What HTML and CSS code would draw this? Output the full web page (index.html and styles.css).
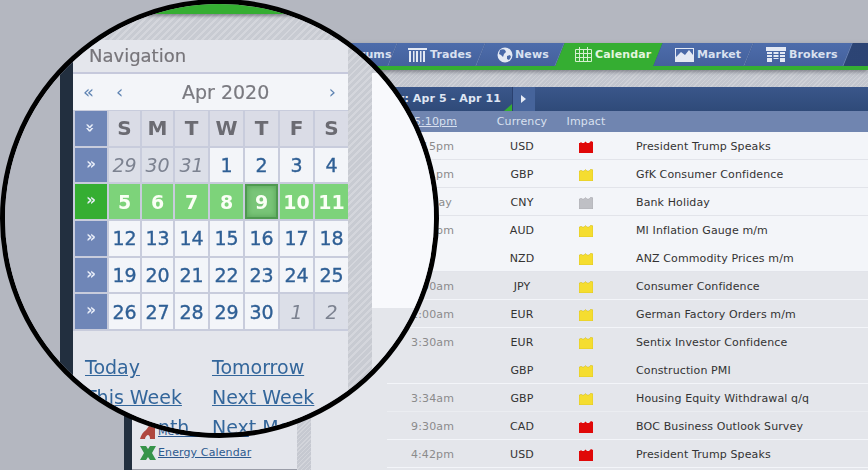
FILE: index.html
```html
<!DOCTYPE html>
<html lang="en">
<head>
  <meta charset="UTF-8" />
  <title>Calendar</title>
  <link rel="stylesheet" href="styles.css">
</head>
<body>
  <div id="page">
    <div id="nav">
      <div class="tab w-forums"><span>Forums</span></div>
      <div class="tab w-trades">
        <svg width="19" height="14" viewBox="0 0 19 14" fill="#e4e9f4"><path d="M0 0h19v2H0zM1 3h2v11H1zM5 3h1.500v11H5zM8 3h2v11H8zM12 3h1.500v11H12zM15 3h2v11h-2z"/></svg>
        <span>Trades</span>
      </div>
      <div class="tab w-news">
        <svg width="16" height="16" viewBox="0 0 16 16"><circle cx="8" cy="8" r="7.500" fill="#e4e9f4"/><path d="M3 3c2-1 4-1 5 0l1 2-2 2-1 3-2-2-2-1zM10 9l3-1 1 2-2 3-2-1z" fill="#4a69a8"/></svg>
        <span>News</span>
      </div>
      <div class="tab tab-on w-cal">
        <svg width="17" height="15" viewBox="0 0 17 15" fill="none" stroke="#d5f0d0" stroke-width="1"><path d="M.5 2.500h16v12H.5zM.5 6.500h16M.5 10.500h16M4.500 2.500v12M8.500 2.500v12M12.500 2.500v12M4.500 0v3M12.500 0v3"/></svg>
        <span>Calendar</span>
      </div>
      <div class="tab w-market">
        <svg width="19" height="14" viewBox="0 0 19 14"><path d="M0 0h19v14H0z" fill="#e4e9f4"/><path d="M1 9l5-5 4 3 4-5 4 5V1H1z" fill="#4a69a8"/></svg>
        <span>Market</span>
      </div>
      <div class="tab w-brokers">
        <svg width="20" height="15" viewBox="0 0 20 15" fill="#e4e9f4"><path d="M0 0h20v4H0zM1 5h5v2H1zM7.500 5h5v2h-5zM14 5h5v2h-5zM1 8h5v2H1zM7.500 8h5v2h-5zM14 8h5v2h-5zM1 11h5v4H1zM14 11h5v4h-5zM7.500 11h5v1h-5z"/></svg>
        <span>Brokers</span>
      </div>
    </div>
    <div id="layout">
      <div class="strip"></div>
      <div class="sidebar">
        <a class="side-link"><svg width="16" height="14" viewBox="0 0 16 14"><path d="M0 14c1-4 3-7 6-9l3-4 6 2v11H10c0-3-1-4-2-4s-3 2-3 4z" fill="#b0483f"/></svg><span>Metals Calendar</span></a>
        <a class="side-link"><svg width="16" height="14" viewBox="0 0 16 14"><path d="M0 0h6l2 3 2-3h6l-4 7 4 7h-6l-2-3-2 3H0l4-7z" fill="#37944a"/></svg><span>Energy Calendar</span></a>
      </div>
      <div class="side-gap"></div>
      <div class="main">
        <div class="hatch-top"></div>
        <div class="datebar">
          <div class="date-label">Calendar: Apr 5 - Apr 11</div>
          <div class="date-next"></div>
        </div>
        <div class="colhead">
          <div class="col-time">
            <svg width="6" height="10" viewBox="0 0 6 10"><path d="M3 0l3 5H4v5H2V5H0z" fill="#e8792a"/></svg>
            <u>5:10pm</u>
          </div>
          <div class="col-cur">Currency</div>
          <div class="col-imp">Impact</div>
        </div>
        <div id="rows"></div>
      </div>
    </div>
  </div>

  <div id="lens">
    <div class="mag">
      <div class="mag-nav"></div>
      <div class="mag-body">
        <div class="mag-strip"></div>
        <div class="mag-card">
          <div class="mag-title">Navigation</div>
          <div class="mag-month">
            <span class="arrow a-first">«</span>
            <span class="arrow a-prev">‹</span>
            <span class="month-name">Apr 2020</span>
            <span class="arrow">›</span>
          </div>
          <div class="cal" id="cal"></div>
          <div class="quick">
            <a>Today</a><a>Tomorrow</a>
            <a>This Week</a><a>Next Week</a>
            <a>This Month</a><a>Next Month</a>
          </div>
        </div>
        <div class="mag-gap"></div>
        <div class="mag-panel">
          <div class="mag-white"></div>
        </div>
      </div>
    </div>
  </div>

  <script>
    const events = [
      ["USD", "red", "President Trump Speaks", "x", "4:15pm"],
      ["GBP", "yel", "GfK Consumer Confidence", "", "7:01pm"],
      ["CNY", "gry", "Bank Holiday", "d", "All Day"],
      ["AUD", "yel", "MI Inflation Gauge m/m", "n", "8:00pm"],
      ["NZD", "yel", "ANZ Commodity Prices m/m", "", ""],
      ["JPY", "yel", "Consumer Confidence", "g", "1:00am"],
      ["EUR", "yel", "German Factory Orders m/m", "g", "2:00am"],
      ["EUR", "yel", "Sentix Investor Confidence", "gn", "3:30am"],
      ["GBP", "yel", "Construction PMI", "g", ""],
      ["GBP", "yel", "Housing Equity Withdrawal q/q", "gf", "3:34am"],
      ["CAD", "red", "BOC Business Outlook Survey", "g", "9:30am"],
      ["USD", "red", "President Trump Speaks", "g", "4:42pm"]
    ];

    const rows = document.getElementById("rows");
    events.forEach((ev) => {
      const row = document.createElement("div");
      row.className = "row";
      if (ev[3].includes("g")) row.classList.add("row-grey");
      if (ev[3].includes("n")) row.classList.add("no-line");
      if (ev[3].includes("f")) row.classList.add("faint");
      if (ev[3].includes("d")) row.classList.add("all-day");
      row.innerHTML =
        '<div class="r-time">' + ev[4] + '</div>' +
        '<div class="r-cur">' + ev[0] + '</div>' +
        '<div class="r-imp"><svg width="14" height="12" viewBox="0 0 14 12"><path class="' + ev[1] + '" d="M0 12V2h1l1-1 1 1h2l1.500-1.500L8 2h2l2-2 2 1v11z"/></svg></div>' +
        '<div class="r-event">' + ev[2] + '</div>';
      rows.appendChild(row);
    });

    const cal = document.getElementById("cal");
    function addCell(cls, txt) {
      const c = document.createElement("div");
      c.className = cls;
      c.textContent = txt;
      cal.appendChild(c);
    }
    addCell("wk wk-down", "»");
    ["S", "M", "T", "W", "T", "F", "S"].forEach((d) => addCell("dow", d));
    const weeks = [
      [29, 30, 31, 1, 2, 3, 4],
      [5, 6, 7, 8, 9, 10, 11],
      [12, 13, 14, 15, 16, 17, 18],
      [19, 20, 21, 22, 23, 24, 25],
      [26, 27, 28, 29, 30, 1, 2]
    ];
    weeks.forEach((w, i) => {
      addCell(i === 1 ? "wk wk-on" : "wk", "»");
      w.forEach((d, j) => {
        let cls = "day";
        if ((i === 0 && j < 3) || (i === 4 && j > 4)) cls += " other";
        if (i === 1) cls += " on";
        if (i === 1 && d === 9) cls += " today";
        addCell(cls, d);
      });
    });
  </script>
</body>
</html>
```

FILE: styles.css
```css
* { box-sizing: border-box; }
html, body {
  margin: 0;
  padding: 0;
  width: 868px;
  height: 470px;
  overflow: hidden;
  font-family: "DejaVu Sans", Verdana, sans-serif;
  font-size: 11px;
  letter-spacing: 0.12px;
  background: #b4b7c0;
}
#page {
  width: 868px;
  height: 470px;
  padding-top: 43px;
  display: flex;
  flex-direction: column;
}

/* top nav */
#nav {
  height: 27px;
  margin-left: 132px;
  padding-left: 173px;
  display: flex;
  flex: none;
  overflow: hidden;
  border-bottom: 4px solid #35ae32;
  background: linear-gradient(90deg, #3a5284, #2c4474);
  box-shadow: 0 2px 4px rgba(60, 60, 70, 0.5);
  position: relative;
  z-index: 1;
}
.tab {
  position: relative;
  height: 23px;
  display: flex;
  align-items: center;
  gap: 3px;
  padding-left: 15px;
  color: #d9e1f0;
  font-weight: bold;
  z-index: 0;
}
.tab::before {
  content: "";
  position: absolute;
  inset: 0;
  z-index: -1;
  transform: skewX(-22deg);
  background: linear-gradient(#4d6cab, #44619c);
  border-right: 1px solid #6a84b8;
}
.tab-on { color: #e3f5df; }
.tab-on::before { background: #35ae32; border-right: none; }
.w-forums { width: 88px; padding-left: 40px; }
.w-trades { width: 88px; }
.w-news { width: 79px; padding-left: 16px; gap: 2px; }
.w-cal { width: 98px; padding-left: 15px; }
.w-market { width: 91px; padding-left: 17px; }
.w-brokers { width: 99px; padding-left: 17px; }

/* page under nav */
#layout {
  flex: 1;
  display: flex;
  padding-left: 124px;
  min-height: 0;
}
.strip {
  width: 8px;
  background: #222f3f;
}
.sidebar {
  width: 165px;
  background: #e4e6ec;
  border-bottom: 1px solid #9a9da8;
  display: flex;
  flex-direction: column;
  justify-content: flex-end;
  padding: 0 0 9px 8px;
  gap: 7px;
}
.side-link {
  display: flex;
  align-items: center;
  gap: 2px;
  color: #2d5a8f;
  line-height: 14px;
  height: 14px;
}
.side-link span { text-decoration: underline; }
.side-gap {
  width: 14px;
  background: repeating-linear-gradient(135deg, #d3d5db 0 1px, #c6c9d1 1px 3px);
}
.main {
  flex: 1;
  background: #e4e6eb;
  min-width: 0;
}
.hatch-top {
  height: 17px;
  background: repeating-linear-gradient(135deg, #cfd1d7 0 1px, #c3c6ce 1px 3px);
}
.datebar {
  height: 24px;
  display: flex;
  background: linear-gradient(#3a568a, #2f4a79);
}
.date-label {
  position: relative;
  width: 202px;
  padding-right: 11px;
  text-align: right;
  line-height: 24px;
  font-weight: bold;
  color: #dfe6f3;
  border-right: 1px solid #2a4170;
}
.date-label::after {
  content: "";
  position: absolute;
  right: 0;
  bottom: 0;
  border-bottom: 7px solid #35ae32;
  border-left: 8px solid transparent;
}
.date-next {
  width: 22px;
  background: #46649b;
  position: relative;
}
.date-next::after {
  content: "";
  position: absolute;
  left: 8px;
  top: 8px;
  border-left: 5px solid #e6ebf5;
  border-top: 4px solid transparent;
  border-bottom: 4px solid transparent;
}
.colhead, .row {
  display: grid;
  grid-template-columns: 67px 112px 40px 1fr;
  align-items: center;
}
.colhead {
  height: 21px;
  padding-left: 76px;
  background: #7085b0;
  color: #d8e0ef;
}
.col-time {
  display: flex;
  align-items: center;
  justify-content: flex-end;
  gap: 1px;
  white-space: nowrap;
  margin-right: -3px;
}
.col-time svg { flex: none; }
.col-cur { margin-left: 24px; text-align: center; }
.col-imp { text-align: center; }
.row {
  margin-left: 76px;
  height: 28px;
  padding-top: 2px;
  background: #f3f5f9;
  border-bottom: 1px solid #e2e4ea;
  color: #333;
}
.row-grey {
  background: #e4e6eb;
  border-bottom: 1px solid #f3f5f9;
}
.no-line { border-bottom-color: transparent; }
.row-grey.no-line { border-bottom-color: transparent; }
.row-grey.faint { border-bottom-color: #ebedf1; }
.r-time { text-align: right; color: #8b8b8b; }
.all-day .r-time { padding-right: 2px; }
.r-cur { margin-left: 24px; text-align: center; }
.r-imp { display: flex; justify-content: center; }
.r-event { margin-left: 30px; }
.red { fill: #e00808; }
.yel { fill: #f5dd30; stroke: #cfb820; stroke-width: 0.5; }
.gry { fill: #bfc0c5; stroke: #a4a5aa; stroke-width: 0.5; }

/* magnifier */
#lens {
  position: absolute;
  left: 0;
  top: -1px;
  z-index: 5;
  width: 439px;
  height: 439px;
  border-radius: 50%;
  border: 5px solid #000;
  overflow: hidden;
  background: #b4b7c0;
}
.mag {
  position: absolute;
  left: -5px;
  top: -4px;
  width: 868px;
  height: 470px;
  display: flex;
  flex-direction: column;
  filter: blur(0.4px);
  letter-spacing: 0;
}
.mag-nav {
  height: 14px;
  flex: none;
  background: #35ae32;
  border-top: 4px solid #2c4474;
  box-shadow: 0 2px 3px rgba(60, 60, 70, 0.5);
  position: relative;
  z-index: 1;
}
.mag-body {
  flex: 1;
  display: flex;
  padding: 26px 0 0 60px;
  background: repeating-linear-gradient(135deg, #d4d6dc 0 2px, #c8cbd2 2px 5px);
  position: relative;
}
.mag-body::before {
  content: "";
  position: absolute;
  left: 0;
  top: 0;
  bottom: 0;
  width: 60px;
  background: #b4b7c0;
}
.mag-strip {
  width: 13px;
  background: #222f3f;
  position: relative;
}
.mag-card {
  width: 275px;
  background: #e4e6ec;
  position: relative;
}
.mag-title {
  height: 34px;
  padding-left: 16px;
  font-size: 18px;
  line-height: 32px;
  color: #77757a;
  -webkit-text-stroke: 0.2px #77757a;
  border-bottom: 2px solid #c6c9dc;
}
.mag-month {
  height: 36px;
  display: flex;
  align-items: center;
  background: #f3f5f9;
  position: relative;
  color: #5f84b3;
  font-size: 18px;
  justify-content: flex-end;
  padding-right: 12px;
}
.arrow { line-height: 1; }
.a-first { position: absolute; left: 10px; }
.a-prev { position: absolute; left: 43px; }
.month-name {
  position: absolute;
  left: 109px;
  font-size: 19px;
  color: #7a7a80;
  -webkit-text-stroke: 0.2px #7a7a80;
}
.cal {
  display: grid;
  grid-template-columns: 32px 31px 31px 33px 33px 33px 33px 33px;
  grid-auto-rows: 34.700px;
  gap: 2px;
  padding: 1px 0 2px 2px;
  background: #c8ccdc;
  text-align: center;
  font-size: 19px;
}
.cal > div {
  display: flex;
  align-items: center;
  justify-content: center;
}
.wk {
  background: #6f86b7;
  color: #e8edf8;
  font-size: 15px;
  font-weight: bold;
  padding-bottom: 3px;
}
.wk-on { background: #35ae32; }
.wk-down { writing-mode: vertical-rl; padding: 0 2px 1px 0; }
.dow {
  background: #dadce6;
  color: #6b6b72;
  font-weight: bold;
  font-size: 20px;
}
.day {
  background: #f3f5f9;
  color: #2f5f95;
  -webkit-text-stroke: 0.35px #2f5f95;
}
.other {
  background: #dcdfe8;
  color: #7c8290;
  font-style: italic;
  -webkit-text-stroke: 0;
}
.on {
  background: #7dd37a;
  color: #fafff5;
  font-weight: bold;
  -webkit-text-stroke: 0;
}
.today {
  background: #79c578;
  box-shadow: inset 0 0 0 2px #4f9a50, inset 0 0 5px 3px #5ea95e;
}
.quick {
  display: grid;
  grid-template-columns: 127px 1fr;
  padding: 21px 0 0 12px;
  font-size: 19px;
  line-height: 30px;
}
.quick a {
  color: #33669b;
  text-decoration: underline;
  white-space: nowrap;
}
.mag-gap { width: 24px; }
.mag-panel {
  flex: 1;
  margin-top: 33px;
  background: #e4e6eb;
}
.mag-white {
  height: 235px;
  background: #f8f9fc;
}
```
